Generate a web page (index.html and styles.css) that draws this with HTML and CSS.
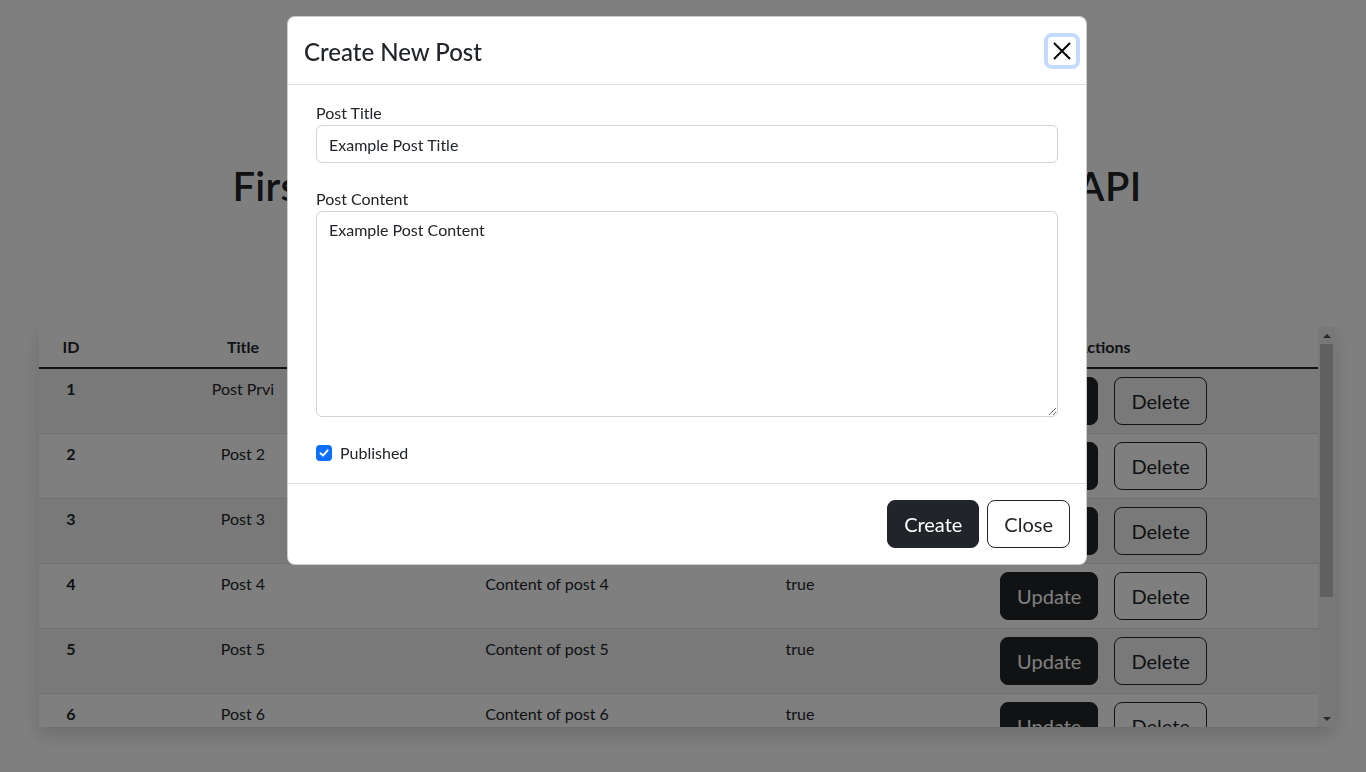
FILE: index.html
```html
<!DOCTYPE html>
<html lang="en">
<head>
<meta charset="utf-8">
<title>Posts</title>
<link rel="stylesheet" href="styles.css">
</head>
<body>
<main class="page">
  <h1 class="page-title">First CRUD Project with Spring Boot and REST API</h1>
  <div class="table-wrap">
    <div class="table-scroll">
      <table class="posts">
        <colgroup>
          <col class="c-id"><col class="c-title"><col class="c-content"><col class="c-pub"><col>
        </colgroup>
        <thead>
          <tr><th>ID</th><th>Title</th><th>Content</th><th>Published</th><th>Actions</th></tr>
        </thead>
        <tbody>
          <tr><td class="id">1</td><td>Post Prvi</td><td>Content of post 1</td><td>true</td><td><div class="acts"><button class="btn btn-dark">Update</button><button class="btn btn-outline">Delete</button></div></td></tr>
          <tr><td class="id">2</td><td>Post 2</td><td>Content of post 2</td><td>true</td><td><div class="acts"><button class="btn btn-dark">Update</button><button class="btn btn-outline">Delete</button></div></td></tr>
          <tr><td class="id">3</td><td>Post 3</td><td>Content of post 3</td><td>true</td><td><div class="acts"><button class="btn btn-dark">Update</button><button class="btn btn-outline">Delete</button></div></td></tr>
          <tr><td class="id">4</td><td>Post 4</td><td>Content of post 4</td><td>true</td><td><div class="acts"><button class="btn btn-dark">Update</button><button class="btn btn-outline">Delete</button></div></td></tr>
          <tr><td class="id">5</td><td>Post 5</td><td>Content of post 5</td><td>true</td><td><div class="acts"><button class="btn btn-dark">Update</button><button class="btn btn-outline">Delete</button></div></td></tr>
          <tr><td class="id">6</td><td>Post 6</td><td>Content of post 6</td><td>true</td><td><div class="acts"><button class="btn btn-dark">Update</button><button class="btn btn-outline">Delete</button></div></td></tr>
          <tr><td class="id">7</td><td>Post 7</td><td>Content of post 7</td><td>true</td><td><div class="acts"><button class="btn btn-dark">Update</button><button class="btn btn-outline">Delete</button></div></td></tr>
          <tr><td class="id">8</td><td>Post 8</td><td>Content of post 8</td><td>true</td><td><div class="acts"><button class="btn btn-dark">Update</button><button class="btn btn-outline">Delete</button></div></td></tr>
        </tbody>
      </table>
    </div>
    <div class="scrollbar" aria-hidden="true">
      <div class="sb-btn"><span class="arrow-up"></span></div>
      <div class="sb-track"><div class="sb-thumb"></div></div>
      <div class="sb-btn"><span class="arrow-down"></span></div>
    </div>
  </div>
</main>

<div class="backdrop"></div>

<div class="modal" role="dialog">
  <div class="modal-header">
    <h4 class="modal-title">Create New Post</h4>
    <button class="btn-close" aria-label="Close">
      <svg width="18" height="18" viewBox="0 0 18 18"><path d="M1 1 L17 17 M17 1 L1 17" stroke="#000" stroke-width="2" fill="none"/></svg>
    </button>
  </div>
  <div class="modal-body">
    <div class="field">
      <label class="form-label">Post Title</label>
      <input class="form-control" type="text" value="Example Post Title">
    </div>
    <div class="field">
      <label class="form-label">Post Content</label>
      <textarea class="form-control area">Example Post Content</textarea>
    </div>
    <div class="check">
      <span class="check-box"><svg width="12" height="12" viewBox="0 0 12 12"><path d="M2.5 6.2 L5 8.6 L9.6 3.4" stroke="#fff" stroke-width="2" fill="none" stroke-linecap="round" stroke-linejoin="round"/></svg></span>
      <span class="check-label">Published</span>
    </div>
  </div>
  <div class="modal-footer">
    <button class="btn btn-dark">Create</button>
    <button class="btn btn-outline">Close</button>
  </div>
</div>
</body>
</html>
```

FILE: styles.css
```css
* { box-sizing: border-box; }

html, body {
  margin: 0;
  height: 100%;
  overflow: hidden;
}

body {
  background: #fff;
  color: #212529;
  font-family: Lato, "Noto Sans", sans-serif;
  font-size: 16px;
  line-height: 24px;
}

.page {
  padding: 162px 0 0 39px;
  width: 1335px;
}

.page-title {
  margin: 0;
  font-size: 40px;
  line-height: 48px;
  font-weight: 600;
  letter-spacing: 0.35px;
  text-align: center;
}

.table-wrap {
  margin-top: 117px;
  height: 400px;
  display: flex;
  background: #fff;
  box-shadow: 0 8px 16px rgba(0, 0, 0, 0.15);
}
.table-scroll {
  flex: 1;
  overflow: hidden;
}

.scrollbar {
  width: 17px;
  display: flex;
  flex-direction: column;
  background: #f1f1f1;
}
.sb-btn {
  height: 17px;
  display: flex;
  align-items: center;
  justify-content: center;
}
.arrow-up {
  width: 0;
  height: 0;
  border-left: 4px solid transparent;
  border-right: 4px solid transparent;
  border-bottom: 4px solid #505050;
}
.arrow-down {
  width: 0;
  height: 0;
  border-left: 4px solid transparent;
  border-right: 4px solid transparent;
  border-top: 4px solid #505050;
}
.sb-track {
  flex: 1;
  padding: 0 2px;
}
.sb-thumb {
  height: 253px;
  background: #c1c1c1;
}

.posts {
  width: 100%;
  border-collapse: collapse;
  table-layout: fixed;
}
.c-id { width: 64px; }
.c-title { width: 280px; }
.c-content { width: 328px; }
.c-pub { width: 178px; }

.posts th,
.posts td {
  padding: 8px;
  text-align: center;
  vertical-align: top;
  border-bottom: 1px solid #dee2e6;
}
.posts th {
  font-weight: 700;
  border-bottom: 2px solid #212529;
}
.posts td.id { font-weight: 700; }
.posts tbody tr:nth-child(odd) td { background: rgba(0, 0, 0, 0.05); }

.acts {
  display: flex;
  justify-content: center;
  gap: 16px;
}

.btn {
  font-family: inherit;
  font-size: 20px;
  line-height: 30px;
  padding: 8px 16px;
  border-radius: 8px;
  border: 1px solid #212529;
  cursor: pointer;
}
.btn-dark {
  background: #212529;
  color: #fff;
}
.btn-outline {
  background: transparent;
  color: #212529;
}

.backdrop {
  position: fixed;
  inset: 0;
  background: rgba(0, 0, 0, 0.5);
}

.modal {
  position: fixed;
  top: 16px;
  left: 287px;
  width: 800px;
  background: #fff;
  border: 1px solid rgba(0, 0, 0, 0.2);
  border-radius: 8px;
}

.modal-header {
  display: flex;
  align-items: center;
  justify-content: space-between;
  padding: 16px 6px 15px 16px;
  border-bottom: 1px solid #dee2e6;
}
.modal-title {
  margin: 0;
  font-size: 24px;
  line-height: 29px;
  font-weight: 500;
}
.btn-close {
  width: 36px;
  height: 36px;
  padding: 0;
  display: flex;
  align-items: center;
  justify-content: center;
  background: #fff;
  border: 4px solid #c2dbfe;
  border-radius: 8px;
}

.modal-body {
  padding: 16px 28px 18px;
}
.field + .field { margin-top: 24px; }
.form-label {
  display: block;
}
.form-control {
  display: block;
  width: 100%;
  height: 38px;
  padding: 6px 12px;
  font-family: inherit;
  font-size: 16px;
  line-height: 24px;
  color: #212529;
  background: #fff;
  border: 1px solid #ced4da;
  border-radius: 6px;
  outline: none;
}
.form-control.area {
  height: 206px;
  resize: vertical;
}

.check {
  margin-top: 24px;
  display: flex;
  align-items: center;
  gap: 8px;
  height: 24px;
}
.check-box {
  width: 16px;
  height: 16px;
  border-radius: 4px;
  background: #0d6efd;
  display: flex;
  align-items: center;
  justify-content: center;
}

.modal-footer {
  display: flex;
  justify-content: flex-end;
  gap: 8px;
  padding: 16px;
  border-top: 1px solid #dee2e6;
}
```
